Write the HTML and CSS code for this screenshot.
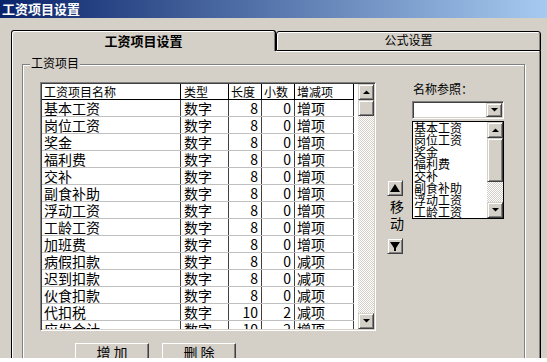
FILE: index.html
```html
<!DOCTYPE html>
<html lang="zh">
<head>
<meta charset="utf-8">
<title>工资项目设置</title>
<link rel="stylesheet" href="styles.css">
</head>
<body>
<div class="window">
  <div class="titlebar">工资项目设置</div>
  <div class="tabs">
    <div class="tab tab-active">工资项目设置</div>
    <div class="tab tab-inactive">公式设置</div>
  </div>
  <div class="panel">
    <div class="group">
      <span class="legend">工资项目</span>
      <div class="top-row">
        <div class="grid-frame">
          <div class="grid">
            <div class="row head"><span>工资项目名称</span><span class="type">类型</span><span>长度</span><span>小数</span><span>增减项</span></div>
            <div class="row"><span>基本工资</span><span class="type">数字</span><span class="num">8</span><span class="num">0</span><span>增项</span></div>
            <div class="row"><span>岗位工资</span><span class="type">数字</span><span class="num">8</span><span class="num">0</span><span>增项</span></div>
            <div class="row"><span>奖金</span><span class="type">数字</span><span class="num">8</span><span class="num">0</span><span>增项</span></div>
            <div class="row"><span>福利费</span><span class="type">数字</span><span class="num">8</span><span class="num">0</span><span>增项</span></div>
            <div class="row"><span>交补</span><span class="type">数字</span><span class="num">8</span><span class="num">0</span><span>增项</span></div>
            <div class="row"><span>副食补助</span><span class="type">数字</span><span class="num">8</span><span class="num">0</span><span>增项</span></div>
            <div class="row"><span>浮动工资</span><span class="type">数字</span><span class="num">8</span><span class="num">0</span><span>增项</span></div>
            <div class="row"><span>工龄工资</span><span class="type">数字</span><span class="num">8</span><span class="num">0</span><span>增项</span></div>
            <div class="row"><span>加班费</span><span class="type">数字</span><span class="num">8</span><span class="num">0</span><span>增项</span></div>
            <div class="row"><span>病假扣款</span><span class="type">数字</span><span class="num">8</span><span class="num">0</span><span>减项</span></div>
            <div class="row"><span>迟到扣款</span><span class="type">数字</span><span class="num">8</span><span class="num">0</span><span>减项</span></div>
            <div class="row"><span>伙食扣款</span><span class="type">数字</span><span class="num">8</span><span class="num">0</span><span>减项</span></div>
            <div class="row"><span>代扣税</span><span class="type">数字</span><span class="num">10</span><span class="num">2</span><span>减项</span></div>
            <div class="row"><span>应发合计</span><span class="type">数字</span><span class="num">10</span><span class="num">2</span><span>增项</span></div>
          </div>
          <div class="gap"></div>
          <div class="vscroll">
            <div class="sbtn"><svg width="7" height="4" viewBox="0 0 7 4"><polygon points="0,4 7,4 3.5,0.5" fill="#000"/></svg></div>
            <div class="thumb"></div>
            <div class="track"></div>
            <div class="sbtn"><svg width="7" height="4" viewBox="0 0 7 4"><polygon points="0,0 7,0 3.5,3.5" fill="#000"/></svg></div>
          </div>
        </div>
        <div class="move">
          <div class="sbtn mbtn"><svg width="10" height="9" viewBox="0 0 10 9"><polygon points="5,0 10,8 0,8" fill="#000"/></svg></div>
          <div class="move-label">移<br>动</div>
          <div class="sbtn mbtn mbtn-down"><svg width="10" height="9" viewBox="0 0 10 9"><polygon points="0,0 10,0 6,6 6,9 4,9 4,6" fill="#000"/></svg></div>
        </div>
        <div class="ref">
          <div class="ref-label">名称参照：</div>
          <div class="combo">
            <div class="sbtn combo-btn"><svg width="7" height="4" viewBox="0 0 7 4"><polygon points="0,0 7,0 3.5,3.5" fill="#000"/></svg></div>
          </div>
          <div class="list">
            <div class="list-items">
              <div>基本工资</div>
              <div>岗位工资</div>
              <div>奖金</div>
              <div>福利费</div>
              <div>交补</div>
              <div>副食补助</div>
              <div>浮动工资</div>
              <div>工龄工资</div>
              <div>加班费</div>
            </div>
            <div class="vscroll list-scroll">
              <div class="sbtn"><svg width="7" height="4" viewBox="0 0 7 4"><polygon points="0,4 7,4 3.5,0.5" fill="#000"/></svg></div>
              <div class="thumb list-thumb"></div>
              <div class="track"></div>
              <div class="sbtn"><svg width="7" height="4" viewBox="0 0 7 4"><polygon points="0,0 7,0 3.5,3.5" fill="#000"/></svg></div>
            </div>
          </div>
        </div>
      </div>
      <div class="buttons">
        <div class="btn">增 加</div>
        <div class="btn">删 除</div>
      </div>
    </div>
  </div>
</div>
<div class="bottom-strip"></div>
</body>
</html>
```

FILE: styles.css
```css
body {
  margin: 0;
  width: 547px;
  height: 362px;
  overflow: hidden;
  display: grid;
  grid-template-rows: 358px 4px;
  background: #d4d0c8;
  color: #000;
  font-family: "Noto Sans CJK SC", "Liberation Sans", sans-serif;
}

.window {
  overflow: hidden;
}

.bottom-strip {
  background: #fff;
}

.titlebar {
  height: 18px;
  line-height: 18px;
  padding-left: 2px;
  background: linear-gradient(to right, #0a246a, #a6caf0);
  color: #fff;
  font-weight: 700;
  font-size: 13px;
}

.tabs {
  display: flex;
  margin-top: 12px;
  padding-left: 11px;
  height: 21px;
}

.tab {
  box-sizing: border-box;
  width: 265px;
  text-align: center;
  white-space: nowrap;
}

.tab-active {
  height: 21px;
  border: 1px solid #000;
  border-bottom: 0;
  border-radius: 3px 3px 0 0;
  box-shadow: inset 1px 1px 0 #fff, inset -1px 0 0 #808080;
  font-weight: 700;
  font-size: 13px;
  line-height: 19px;
}

.tab-inactive {
  margin-top: 1px;
  height: 20px;
  border: 1px solid #000;
  border-radius: 3px 3px 0 0;
  box-shadow: inset 1px 1px 0 #fff, inset -1px 0 0 #808080;
  font-size: 12px;
  line-height: 16px;
}

.panel {
  margin-left: 11px;
  width: 530px;
  height: 307px;
  box-sizing: border-box;
  border-left: 1px solid #000;
  border-right: 1px solid #000;
  background: linear-gradient(#fff, #fff) 264px 0 / 100% 1px no-repeat, #d4d0c8;
  box-shadow: inset 1px 0 0 #fff, inset -1px 0 0 #808080;
  padding: 13px 0 0 10px;
}

.group {
  position: relative;
  box-sizing: border-box;
  width: 503px;
  height: 320px;
  border: 1px solid #808080;
  box-shadow: inset 1px 1px 0 #fff, 1px 1px 0 #fff;
  padding: 17px 0 0 17px;
}

.legend {
  position: absolute;
  top: -9px;
  left: 7px;
  padding: 0 1px;
  background: #d4d0c8;
  font-size: 12px;
  line-height: 14px;
}

.top-row {
  display: flex;
  align-items: flex-start;
}

.grid-frame {
  display: flex;
  border: 1px solid;
  border-color: #808080 #fff #fff #808080;
  padding: 1px;
  box-shadow: inset 1px 1px 0 #404040, inset -1px -1px 0 #d4d0c8;
  background: #fff;
}

.grid {
  width: 312px;
  height: 245px;
  overflow: hidden;
  background: #fff;
}

.row {
  display: grid;
  grid-template-columns: 139px 48px 33px 33px 59px;
  height: 17px;
  box-sizing: border-box;
  border-bottom: 1px solid #c0c0c0;
  font-size: 14px;
  line-height: 16px;
}

.row > span {
  border-right: 1px solid #404040;
  padding-left: 2px;
  white-space: nowrap;
  overflow: hidden;
}

.row > .type {
  padding-left: 3px;
}

.row > .num {
  text-align: right;
  padding-left: 0;
  padding-right: 3px;
}

.head {
  height: 16px;
  border-bottom-color: #000;
  font-size: 12px;
  line-height: 15px;
}

.head > span {
  border-right-color: #000;
}

.gap {
  width: 4px;
}

.vscroll {
  width: 16px;
  height: 245px;
  display: flex;
  flex-direction: column;
}

.sbtn,
.thumb {
  box-sizing: border-box;
  width: 16px;
  height: 16px;
  flex: none;
  border: 1px solid;
  border-color: #d4d0c8 #404040 #404040 #d4d0c8;
  box-shadow: inset 1px 1px 0 #fff, inset -1px -1px 0 #808080;
  background: #d4d0c8;
  display: flex;
  align-items: center;
  justify-content: center;
}

.sbtn svg {
  display: block;
}

.track {
  flex: 1;
  background: conic-gradient(#fff 25%, #d4d0c8 0 50%, #fff 0 75%, #d4d0c8 0) 0 0 / 2px 2px;
}

.move {
  margin-left: 11px;
  width: 16px;
  padding-top: 98px;
}

.move-label {
  margin: 2px 0 0 3px;
  width: 14px;
  font-size: 14px;
  line-height: 17px;
}

.mbtn-down {
  margin-top: 6px;
}

.ref {
  margin-left: 9px;
  width: 92px;
}

.ref-label {
  font-size: 12px;
  line-height: 14px;
  padding-left: 1px;
  white-space: nowrap;
}

.combo {
  margin-top: 5px;
  box-sizing: border-box;
  height: 18px;
  display: flex;
  justify-content: flex-end;
  border: 1px solid;
  border-color: #808080 #fff #fff #808080;
  padding: 1px;
  box-shadow: inset 1px 1px 0 #404040, inset -1px -1px 0 #d4d0c8;
  background: #fff;
}

.combo-btn {
  height: 14px;
}

.list {
  margin-top: 2px;
  box-sizing: border-box;
  height: 98px;
  border: 1px solid #000;
  background: #fff;
  display: flex;
}

.list-items {
  flex: 1;
  overflow: hidden;
  font-size: 12px;
  line-height: 12px;
  padding-left: 1px;
  white-space: nowrap;
}

.list-scroll {
  height: 96px;
}

.list-thumb {
  height: 44px;
}

.buttons {
  display: flex;
  gap: 13px;
  margin: 12px 0 0 35px;
}

.btn {
  box-sizing: border-box;
  width: 74px;
  height: 23px;
  border: 1px solid;
  border-color: #fff #404040 #404040 #fff;
  box-shadow: inset -1px -1px 0 #808080;
  text-align: center;
  font-size: 14px;
  line-height: 16px;
}
```
